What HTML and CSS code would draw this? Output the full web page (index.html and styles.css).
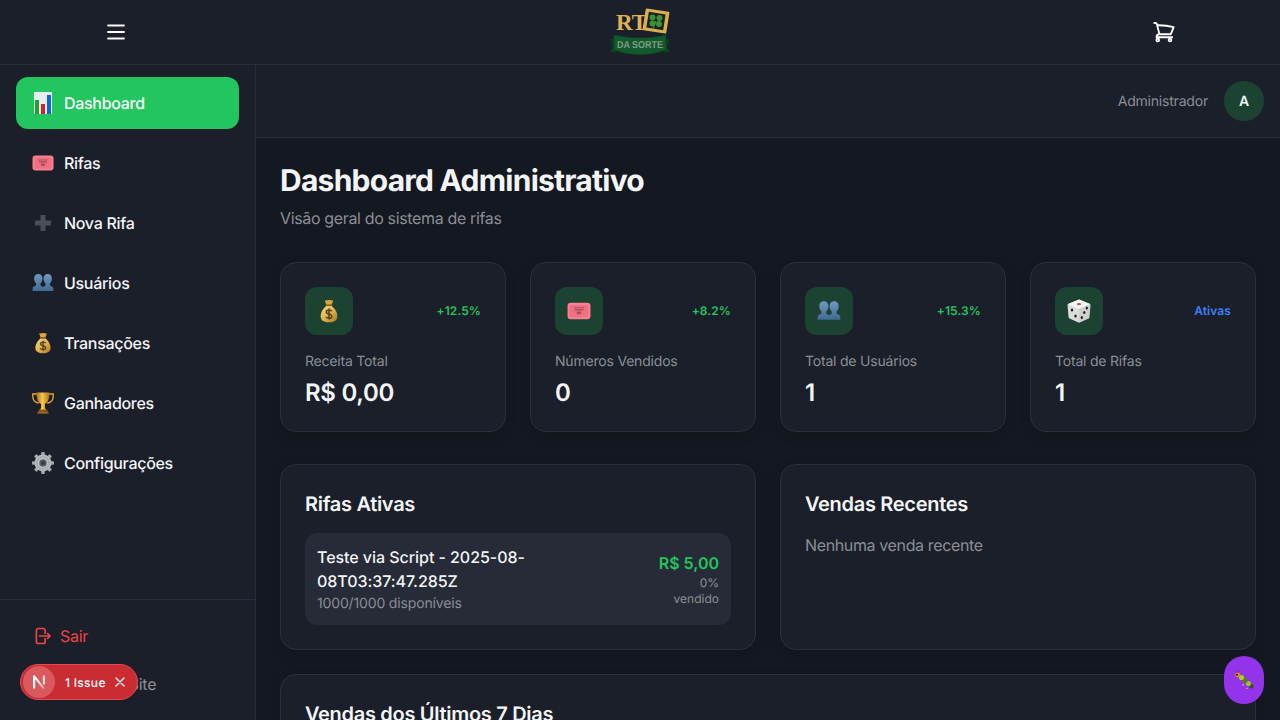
FILE: index.html
```html
<!DOCTYPE html>
<html lang="pt-BR">
<head>
<meta charset="utf-8">
<title>Dashboard Administrativo</title>
<link rel="stylesheet" href="styles.css">
</head>
<body>
<svg class="sprite" width="0" height="0" aria-hidden="true">
  <defs>
    <linearGradient id="gBag" x1="0" y1="0" x2="1" y2="1"><stop offset="0" stop-color="#f7dc8c"/><stop offset=".55" stop-color="#dfae48"/><stop offset="1" stop-color="#a8752a"/></linearGradient>
    <linearGradient id="gUser" x1="0" y1="0" x2="0" y2="1"><stop offset="0" stop-color="#7198c0"/><stop offset="1" stop-color="#3f6a92"/></linearGradient>
    <linearGradient id="gTrophy" x1="0" y1="0" x2="1" y2="0"><stop offset="0" stop-color="#b0710f"/><stop offset=".45" stop-color="#f8c948"/><stop offset="1" stop-color="#b0710f"/></linearGradient>
    <radialGradient id="gGear"><stop offset="0" stop-color="#6b7280"/><stop offset=".5" stop-color="#d4d6da"/><stop offset="1" stop-color="#9a9da3"/></radialGradient>
    <linearGradient id="gN" x1="0" y1="0" x2="1" y2="1"><stop offset=".4" stop-color="#fff"/><stop offset="1" stop-color="#fff" stop-opacity=".3"/></linearGradient>
    <symbol id="i-chart" viewBox="0 0 22 22">
      <rect x="2" y="0" width="18" height="22" fill="#e6edf2"/>
      <rect x="3" y="8" width="4" height="14" fill="#1fa32c"/>
      <rect x="9" y="12" width="4" height="10" fill="#d3202a"/>
      <rect x="15" y="3" width="4" height="19" fill="#1463c8"/>
    </symbol>
    <symbol id="i-ticket" viewBox="0 0 22 22">
      <rect x=".5" y="3.500" width="21" height="15" rx="3" fill="#f8808f"/>
      <rect x="2.500" y="5.500" width="17" height="11" rx="1" fill="#f26f82"/>
      <rect x="6.500" y="7.500" width="9" height="1" fill="#a9505e"/>
      <rect x="7" y="9.200" width="8" height="1.400" fill="#a9505e"/>
      <rect x="9" y="11.500" width="4" height="2.500" fill="#a9505e"/>
    </symbol>
    <symbol id="i-plus" viewBox="0 0 22 22">
      <path d="M8.500 3h5v5.500H19v5h-5.500V19h-5v-5.500H3v-5h5.500z" fill="#4a4e55"/>
    </symbol>
    <symbol id="i-users" viewBox="0 0 22 22">
      <g fill="url(#gUser)">
        <path d="M6.300 2c2.600 0 4.200 2 4.200 4.600 0 2-.8 3.800-2 4.900v2c1 .6 2 .9 2.500 1.600V19H.6v-2.600c0-1.300 1.700-2.200 3.500-2.900v-2C2.900 10.400 2.100 8.600 2.100 6.600 2.100 4 3.700 2 6.300 2z"/>
        <path d="M15.700 2c2.600 0 4.200 2 4.200 4.600 0 2-.8 3.800-2 4.900v2c1.800.7 3.500 1.600 3.500 2.900V19H11v-3.900c.5-.7 1.500-1 2.500-1.600v-2c-1.200-1.100-2-2.900-2-4.900 0-2.600 1.600-4.600 4.200-4.600z"/>
      </g>
    </symbol>
    <symbol id="i-bag" viewBox="0 0 22 22">
      <path d="M7 1.200c1.300.6 2.600-.5 4-.3 1.400-.2 2.700.9 4 .3l-1.700 4.300h-4.600z" fill="#d9a63f"/>
      <rect x="8" y="5" width="6" height="1.400" fill="#8a5a1c"/>
      <path d="M8.400 6.400h5.200c2.300 2 5 5.300 5 9.300 0 4.200-3.200 5.500-7.600 5.500s-7.600-1.300-7.600-5.500c0-4 2.700-7.300 5-9.300z" fill="url(#gBag)"/>
      <path d="M13.600 11.200c-.6-.8-1.500-1.100-2.600-1.100-1.400 0-2.500.7-2.500 1.800 0 2.500 5.100 1.200 5.100 3.800 0 1.100-1.100 1.900-2.600 1.900-1.200 0-2.200-.4-2.800-1.200M11 8.800v10" fill="none" stroke="#4f4320" stroke-width="1.400"/>
    </symbol>
    <symbol id="i-trophy" viewBox="0 0 22 22">
      <path d="M5 2H.8v2.500c0 3.500 2.400 6 6 6.500M17 2h4.200v2.500c0 3.500-2.400 6-6 6.500" fill="none" stroke="#e3a52c" stroke-width="1.400"/>
      <path d="M4.500 .5h13c0 5.500-1 9.500-4.600 11.500v3.500c0 1 .8 1.800 1.800 2.200H7.300c1-.4 1.800-1.200 1.800-2.200V12C5.500 10 4.500 6 4.500 .5z" fill="url(#gTrophy)"/>
      <rect x="6.500" y="18" width="9" height="2.600" fill="#8a5416"/>
      <rect x="5.500" y="20.300" width="11" height="1.200" fill="#c07c1e"/>
    </symbol>
    <symbol id="i-gear" viewBox="0 0 22 22">
      <g fill="#a4a7ad">
        <rect x="9.200" y="0" width="3.600" height="22" rx="1"/>
        <rect x="9.200" y="0" width="3.600" height="22" rx="1" transform="rotate(45 11 11)"/>
        <rect x="9.200" y="0" width="3.600" height="22" rx="1" transform="rotate(90 11 11)"/>
        <rect x="9.200" y="0" width="3.600" height="22" rx="1" transform="rotate(135 11 11)"/>
      </g>
      <circle cx="11" cy="11" r="8.500" fill="#b4b7bc"/>
      <circle cx="11" cy="11" r="6.500" fill="url(#gGear)"/>
      <circle cx="11" cy="11" r="3.800" fill="#5c6069"/>
      <circle cx="11" cy="11" r="2.200" fill="#3b3f47"/>
    </symbol>
    <symbol id="i-die" viewBox="0 0 24 24">
      <path d="M12 .5l10.600 4.300c.6.3.9.8.9 1.400l-1.100 12c0 .6-.4 1.100-1 1.400L12.500 23.500a1.200 1.200 0 0 1-1 0L2.600 19.600c-.6-.3-1-.8-1-1.400L.5 6.200c0-.6.3-1.100.9-1.400z" fill="#dcdcd9"/>
      <path d="M12 .5l10.900 4.600L12 10 1.100 5.100z" fill="#f6f6f4"/>
      <path d="M12 10l11-4.700-1.400 14-9.600 4.200z" fill="#cfcfcc"/>
      <ellipse cx="12" cy="5.200" rx="2" ry="1.100" fill="#d8433f"/>
      <g fill="#1a1a1a">
        <ellipse cx="5" cy="11" rx="1.200" ry="1.600"/>
        <ellipse cx="8.500" cy="17" rx="1.200" ry="1.600"/>
        <ellipse cx="19.800" cy="9" rx="1.100" ry="1.600"/>
        <ellipse cx="17.300" cy="13.500" rx="1.100" ry="1.600"/>
        <ellipse cx="14.800" cy="18.500" rx="1.100" ry="1.600"/>
      </g>
    </symbol>
    <symbol id="i-bug" viewBox="0 0 24 24">
      <path d="M3 2.500l2 2M6.500 1.500l-.5 2" stroke="#4a3a20" stroke-width=".8" fill="none"/>
      <circle cx="20" cy="19" r="2.300" fill="#2f5210"/>
      <circle cx="16.800" cy="15.800" r="2.800" fill="#9cc824"/>
      <circle cx="13" cy="12.500" r="2.900" fill="#587f14"/>
      <circle cx="9.300" cy="9.300" r="2.800" fill="#a7cf28"/>
      <circle cx="5.200" cy="6.500" r="2.700" fill="#e88a1a"/>
      <circle cx="4.400" cy="6.300" r="1" fill="#1e1408"/>
      <path d="M11.500 16.500l-.8 1.800M15.500 20.500l-.6 1.500" stroke="#f2e9c9" stroke-width="1"/>
    </symbol>
  </defs>
</svg>

<div class="app">
  <header class="site-header">
    <button class="icon-btn" aria-label="Menu">
      <svg class="icon-24" viewBox="0 0 24 24" fill="none" stroke="currentColor" stroke-width="1.800" stroke-linecap="round" stroke-linejoin="round"><path d="M4 5.500h16M4 12h16M4 18.500h16"/></svg>
    </button>
    <svg class="logo" viewBox="0 0 60 48" aria-label="RT da Sorte">
      <g transform="rotate(9 46 13)">
        <rect x="34" y="2" width="24" height="22" rx="1" fill="#dcae52"/>
        <rect x="37.500" y="5" width="17" height="16" fill="#16241b"/>
      </g>
      <g fill="#3f8f3a">
        <circle cx="42.500" cy="9.500" r="3"/><circle cx="49.500" cy="10" r="3"/><circle cx="42.500" cy="15.500" r="3"/><circle cx="49" cy="16" r="3"/>
      </g>
      <path d="M46 13l-3 8" stroke="#3f8f3a" stroke-width="1.200"/>
      <text class="logo-rt" x="6" y="22">RT</text>
      <path d="M0 31l6 1v13l-6-1 3-6zM60 31l-6 1v13l6-1-3-6z" fill="#0c4020"/>
      <path d="M4 27c17 4 35 4 52 0v15c-17 6-35 6-52 0z" fill="#14592c" stroke="#0e4522" stroke-width="1"/>
      <text class="logo-sub" x="30" y="39.500" text-anchor="middle" textLength="46" lengthAdjust="spacingAndGlyphs">DA SORTE</text>
    </svg>
    <button class="icon-btn" aria-label="Carrinho">
      <svg class="icon-24" viewBox="0 0 24 24" fill="none" stroke="currentColor" stroke-width="1.800" stroke-linecap="round" stroke-linejoin="round"><path d="M2.250 3h1.386c.51 0 .955.343 1.087.835l.383 1.437M7.500 14.250a3 3 0 0 0-3 3h15.750m-12.750-3h11.218c1.121-2.300 2.100-4.684 2.924-7.138a60.114 60.114 0 0 0-16.536-1.840M7.500 14.250L5.106 5.272"/><circle cx="5.750" cy="20" r="1.400"/><circle cx="18" cy="20" r="1.400"/></svg>
    </button>
  </header>

  <div class="shell">
    <aside class="sidebar">
      <nav class="nav">
        <a class="nav-item active"><svg class="emoji"><use href="#i-chart"/></svg>Dashboard</a>
        <a class="nav-item"><svg class="emoji"><use href="#i-ticket"/></svg>Rifas</a>
        <a class="nav-item"><svg class="emoji"><use href="#i-plus"/></svg>Nova Rifa</a>
        <a class="nav-item"><svg class="emoji"><use href="#i-users"/></svg>Usuários</a>
        <a class="nav-item"><svg class="emoji"><use href="#i-bag"/></svg>Transações</a>
        <a class="nav-item"><svg class="emoji"><use href="#i-trophy"/></svg>Ganhadores</a>
        <a class="nav-item"><svg class="emoji"><use href="#i-gear"/></svg>Configurações</a>
      </nav>
      <div class="side-foot">
        <a class="foot-item danger">
          <svg class="icon-20" viewBox="0 0 24 24" fill="none" stroke="currentColor" stroke-width="2" stroke-linecap="round" stroke-linejoin="round"><path d="M15.750 9V5.250A2.250 2.250 0 0 0 13.500 3h-6a2.250 2.250 0 0 0-2.250 2.250v13.500A2.250 2.250 0 0 0 7.500 21h6a2.250 2.250 0 0 0 2.250-2.250V15m3 0l3-3m0 0l-3-3m3 3H9"/></svg>
          Sair
        </a>
        <a class="foot-item muted"><span class="icon-20"></span>Voltar ao Site</a>
      </div>
    </aside>

    <main class="main">
      <div class="topbar">
        <span class="admin-name">Administrador</span>
        <span class="avatar">A</span>
      </div>
      <div class="content">
        <h1 class="page-title">Dashboard Administrativo</h1>
        <p class="page-sub">Visão geral do sistema de rifas</p>

        <section class="stats">
          <article class="card stat">
            <div class="stat-top"><span class="stat-icon"><svg class="stat-emoji"><use href="#i-bag"/></svg></span><span class="trend">+12.5%</span></div>
            <div class="stat-label">Receita Total</div>
            <div class="stat-value">R$ 0,00</div>
          </article>
          <article class="card stat">
            <div class="stat-top"><span class="stat-icon"><svg class="stat-emoji"><use href="#i-ticket"/></svg></span><span class="trend">+8.2%</span></div>
            <div class="stat-label">Números Vendidos</div>
            <div class="stat-value">0</div>
          </article>
          <article class="card stat">
            <div class="stat-top"><span class="stat-icon"><svg class="stat-emoji"><use href="#i-users"/></svg></span><span class="trend">+15.3%</span></div>
            <div class="stat-label">Total de Usuários</div>
            <div class="stat-value">1</div>
          </article>
          <article class="card stat">
            <div class="stat-top"><span class="stat-icon"><svg class="stat-emoji"><use href="#i-die"/></svg></span><span class="trend blue">Ativas</span></div>
            <div class="stat-label">Total de Rifas</div>
            <div class="stat-value">1</div>
          </article>
        </section>

        <section class="two-col">
          <article class="card panel">
            <h2 class="panel-title">Rifas Ativas</h2>
            <div class="raffle">
              <div class="raffle-main">
                <div class="raffle-name">Teste via Script - 2025-08-08T03:37:47.285Z</div>
                <div class="raffle-meta">1000/1000 disponíveis</div>
              </div>
              <div class="raffle-side">
                <div class="raffle-price">R$ 5,00</div>
                <div class="raffle-pct">0% vendido</div>
              </div>
            </div>
          </article>
          <article class="card panel">
            <h2 class="panel-title">Vendas Recentes</h2>
            <p class="empty">Nenhuma venda recente</p>
          </article>
        </section>

        <article class="card panel">
          <h2 class="panel-title">Vendas dos Últimos 7 Dias</h2>
        </article>
      </div>
    </main>
  </div>
</div>

<div class="issue-badge">
  <span class="issue-logo">
    <svg class="issue-n" viewBox="0 0 16 16" aria-hidden="true"><path d="M2 14.500V1.500h2L14 14.500h-2.500L4.200 5v9.500z" fill="url(#gN)"/><path d="M11.800 1.500H14v9h-2.200z" fill="#fff" fill-opacity=".75"/></svg>
  </span>
  <span class="issue-text">1 Issue</span>
  <svg class="issue-x" viewBox="0 0 12 12" fill="none" stroke="currentColor" stroke-width="1.300" stroke-linecap="round"><path d="M2 2l8 8M10 2l-8 8"/></svg>
</div>
<button class="bug-btn" aria-label="Debug"><svg class="bug-icon"><use href="#i-bug"/></svg></button>
</body>
</html>
```

FILE: styles.css
```css
* { box-sizing: border-box; }
html, body { margin: 0; height: 720px; overflow: hidden; }
body {
  font-family: Inter, "Noto Sans", sans-serif;
  background: #141820;
  color: #f3f4f6;
  text-rendering: geometricPrecision;
}
.sprite { position: absolute; }

.app { display: flex; flex-direction: column; height: 720px; }

.site-header {
  flex: none;
  height: 65px;
  padding: 0 104px;
  display: flex;
  align-items: center;
  justify-content: space-between;
  background: #1a1f2a;
  border-bottom: 1px solid #272d39;
}
.icon-btn {
  width: 24px; height: 24px; padding: 0;
  background: none; border: 0; color: #fff;
  display: flex;
}
.icon-24 { width: 24px; height: 24px; }
.icon-20 { width: 20px; height: 20px; flex: none; }
.logo { width: 60px; height: 48px; }
.logo-rt { font: 700 23px "Liberation Serif", serif; fill: #e0b255; }
.logo-sub { font: 700 10px "Liberation Sans", sans-serif; fill: #7e9c86; }

.shell { flex: 1; display: flex; min-height: 0; }

.sidebar {
  flex: none;
  width: 256px;
  display: flex;
  flex-direction: column;
  background: #1a1f2a;
  border-right: 1px solid #272d39;
}
.nav {
  flex: 1;
  padding: 12px 16px 0;
  display: flex;
  flex-direction: column;
  gap: 8px;
}
.nav-item {
  height: 52px;
  padding: 0 16px;
  display: flex;
  align-items: center;
  gap: 10px;
  border-radius: 12px;
  font-size: 16px;
  font-weight: 500;
  letter-spacing: -.3px;
  color: #f3f4f6;
}
.nav-item.active { background: #22c55e; color: #fff; }
.emoji { width: 22px; height: 22px; flex: none; }

.side-foot {
  padding: 16px;
  display: flex;
  flex-direction: column;
  gap: 8px;
  border-top: 1px solid #272d39;
}
.foot-item {
  height: 40px;
  padding: 0 16px;
  display: flex;
  align-items: center;
  gap: 8px;
  font-size: 16px;
  letter-spacing: -.3px;
}
.foot-item.danger { color: #ef4444; }
.foot-item.muted { color: #8b8e94; }

.main { flex: 1; min-width: 0; overflow: hidden; }
.topbar {
  height: 73px;
  padding: 0 16px;
  display: flex;
  align-items: center;
  justify-content: flex-end;
  gap: 16px;
  background: #1a1f2a;
  border-bottom: 1px solid #272d39;
}
.admin-name { font-size: 14px; letter-spacing: -.2px; color: #8b8e94; }
.avatar {
  width: 40px; height: 40px;
  border-radius: 50%;
  background: #1c4332;
  color: #f3f4f6;
  display: flex;
  align-items: center;
  justify-content: center;
  font-size: 14px;
  font-weight: 600;
}

.content { padding: 24px; }
.page-title { margin: 1px 0 0; font-size: 30px; line-height: 36px; font-weight: 700; letter-spacing: -.75px; color: #f3f4f6; }
.page-sub { margin: 7px 0 32px; font-size: 16px; line-height: 24px; letter-spacing: -.35px; color: #8b8e94; }

.card {
  background: #1a1f2a;
  border: 1px solid #2a303d;
  border-radius: 16px;
  box-shadow: 0 4px 12px rgba(0, 0, 0, .12);
}
.stats {
  display: grid;
  grid-template-columns: repeat(4, 1fr);
  gap: 24px;
  margin-bottom: 32px;
}
.stat { padding: 24px 24px 22px; }
.stat-top { display: flex; align-items: center; justify-content: space-between; margin-bottom: 17px; }
.stat-icon {
  width: 48px; height: 48px;
  border-radius: 12px;
  background: #1c4332;
  display: flex;
  align-items: center;
  justify-content: center;
}
.stat-emoji { width: 24px; height: 24px; }
.trend { font-size: 12px; line-height: 16px; font-weight: 600; letter-spacing: .1px; color: #22c55e; }
.trend.blue { color: #3b82f6; }
.stat-label { font-size: 14px; line-height: 20px; letter-spacing: -.2px; color: #8b8e94; margin-bottom: 5px; }
.stat-value { font-size: 24px; line-height: 32px; font-weight: 600; letter-spacing: -.3px; color: #f3f4f6; }

.two-col {
  display: grid;
  grid-template-columns: 1fr 1fr;
  gap: 24px;
  margin-bottom: 24px;
}
.panel { padding: 24px; }
.panel-title { margin: 1px 0 15px; font-size: 20px; line-height: 28px; font-weight: 600; letter-spacing: -.3px; color: #f3f4f6; }
.empty { margin: 0; font-size: 16px; line-height: 24px; letter-spacing: -.37px; color: #8b8e94; }

.raffle {
  display: flex;
  align-items: center;
  justify-content: space-between;
  padding: 12px;
  background: #262b37;
  border-radius: 12px;
}
.raffle-main { max-width: 220px; }
.raffle-name { font-size: 16px; line-height: 24px; font-weight: 500; letter-spacing: -.05px; color: #f3f4f6; }
.raffle-meta { font-size: 14px; line-height: 22px; margin-bottom: -2px; letter-spacing: -.15px; color: #8b8e94; }
.raffle-side { width: 60px; text-align: right; }
.raffle-price { font-size: 16px; line-height: 24px; font-weight: 600; color: #22c55e; white-space: nowrap; direction: rtl; }
.raffle-pct { font-size: 12px; line-height: 16px; color: #8b8e94; }

.issue-badge {
  position: fixed;
  left: 20px;
  top: 664px;
  width: 118px;
  height: 36px;
  padding: 2px 11px 2px 2px;
  display: flex;
  align-items: center;
  background: #c92d33;
  border: 1px solid #e5484d;
  border-radius: 18px;
  color: #fff;
}
.issue-logo {
  width: 32px; height: 32px;
  border-radius: 50%;
  background: #d9595e;
  display: flex;
  align-items: center;
  justify-content: center;
}
.issue-n { width: 16px; height: 16px; }
.issue-text { margin-left: 10px; font-size: 12px; font-weight: 500; letter-spacing: .3px; white-space: nowrap; }
.issue-x { width: 12px; height: 12px; margin-left: auto; }

.bug-btn {
  position: fixed;
  left: 1224px;
  top: 656px;
  width: 40px;
  height: 48px;
  padding: 0;
  border: 0;
  border-radius: 20px;
  background: #9333ea;
  display: flex;
  align-items: center;
  justify-content: center;
}
.bug-icon { width: 22px; height: 22px; }
```
